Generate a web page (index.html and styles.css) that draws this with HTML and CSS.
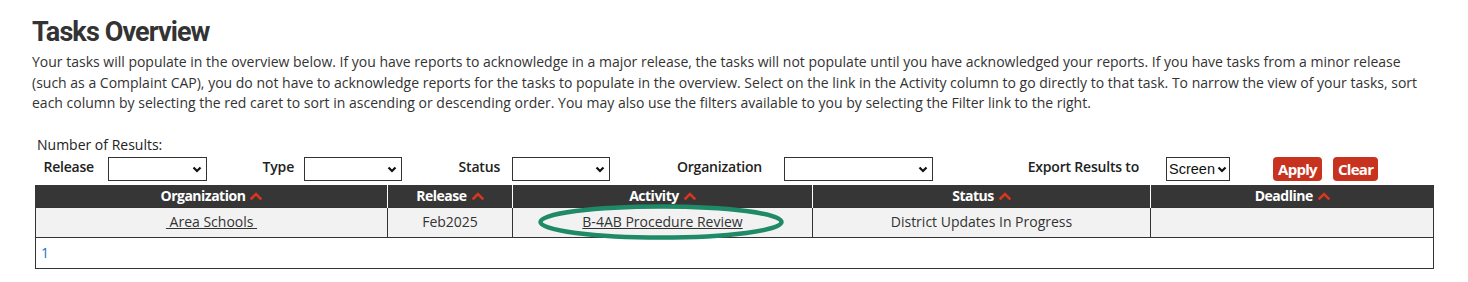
FILE: index.html
```html
<!DOCTYPE html>
<html lang="en">
<head>
<meta charset="utf-8">
<title>Tasks Overview</title>
<link rel="stylesheet" href="styles.css">
</head>
<body>
<div class="page">
  <h1 class="title">Tasks Overview</h1>
  <p class="intro">Your tasks will populate in the overview below. If you have reports to acknowledge in a major release, the tasks will not populate until you have acknowledged your reports. If you have tasks from a minor release (such as a Complaint CAP), you do not have to acknowledge reports for the tasks to populate in the overview. Select on the link in the Activity column to go directly to that task. To narrow the view of your tasks, sort each column by selecting the red caret to sort in ascending or descending order. You may also use the filters available to you by selecting the Filter link to the right.</p>

  <div class="filters">
    <div class="results-label">Number of Results:</div>
    <div class="filter-row">
      <label class="flabel f-release">Release</label>
      <span class="selectwrap"><select class="fselect"><option></option></select><svg class="chev" viewBox="0 0 10 7"><polyline points="1.5,1.5 5,5 8.5,1.5"/></svg></span>
      <label class="flabel f-type">Type</label>
      <span class="selectwrap"><select class="fselect"><option></option></select><svg class="chev" viewBox="0 0 10 7"><polyline points="1.5,1.5 5,5 8.5,1.5"/></svg></span>
      <label class="flabel f-status">Status</label>
      <span class="selectwrap"><select class="fselect"><option></option></select><svg class="chev" viewBox="0 0 10 7"><polyline points="1.5,1.5 5,5 8.5,1.5"/></svg></span>
      <label class="flabel f-org">Organization</label>
      <span class="selectwrap"><select class="fselect"><option></option></select><svg class="chev" viewBox="0 0 10 7"><polyline points="1.5,1.5 5,5 8.5,1.5"/></svg></span>
      <label class="flabel f-export">Export Results to</label>
      <span class="selectwrap"><select class="fselect export"><option>Screen</option></select><svg class="chev chev-export" viewBox="0 0 10 7"><polyline points="1.5,1.5 5,5 8.5,1.5"/></svg></span>
      <div class="buttons">
        <button class="btn">Apply</button>
        <button class="btn">Clear</button>
      </div>
    </div>
  </div>

  <table class="tasks">
    <colgroup>
      <col class="c-org"><col class="c-rel"><col class="c-act"><col class="c-status"><col class="c-dead">
    </colgroup>
    <thead>
      <tr>
        <th>Organization <svg class="caret" viewBox="0 0 12 8"><polyline points="1.5,6.5 6,2 10.5,6.5"/></svg></th>
        <th>Release <svg class="caret" viewBox="0 0 12 8"><polyline points="1.5,6.5 6,2 10.5,6.5"/></svg></th>
        <th>Activity <svg class="caret" viewBox="0 0 12 8"><polyline points="1.5,6.5 6,2 10.5,6.5"/></svg></th>
        <th>Status <svg class="caret" viewBox="0 0 12 8"><polyline points="1.5,6.5 6,2 10.5,6.5"/></svg></th>
        <th>Deadline <svg class="caret" viewBox="0 0 12 8"><polyline points="1.5,6.5 6,2 10.5,6.5"/></svg></th>
      </tr>
    </thead>
    <tbody>
      <tr class="data">
        <td><a href="#">&nbsp;Area Schools&nbsp;</a></td>
        <td>Feb2025</td>
        <td><span class="circled"><a href="#">B-4AB Procedure Review</a><svg class="ring" viewBox="0 0 250 38"><ellipse cx="125" cy="19" rx="120.5" ry="15.5"/></svg></span></td>
        <td>District Updates In Progress</td>
        <td></td>
      </tr>
      <tr class="pager">
        <td colspan="5"><a href="#">1</a></td>
      </tr>
    </tbody>
  </table>
</div>
</body>
</html>
```

FILE: styles.css
```css
html, body {
  margin: 0;
  padding: 0;
  background: #ffffff;
}

body {
  font-family: "Open Sans", "Liberation Sans", sans-serif;
  font-size: 14px;
  color: #333333;
}

.page {
  padding: 15px 32px 0 32px;
}

.title {
  font-family: Roboto, "Liberation Sans", sans-serif;
  font-weight: 700;
  font-size: 27px;
  line-height: 34px;
  letter-spacing: -0.9px;
  margin: 0;
  color: #333333;
}

.intro {
  margin: 3px 0 0 0;
  line-height: 20.5px;
  color: #333333;
}

.filters {
  margin: 21px 0 0 3px;
}

.results-label {
  padding-left: 2px;
  line-height: 20px;
  color: #222222;
  font-weight: 500;
}

.filter-row {
  display: grid;
  grid-template-columns: 73px 99px 97px 98px 110px 98px 174px 149px 233px 64px 1fr;
  align-items: center;
  height: 28px;
  margin-top: 0;
}

.flabel {
  font-weight: 600;
  color: #222222;
  text-align: right;
  padding-right: 12px;
  padding-bottom: 4px;
  letter-spacing: -0.2px;
}

.f-release { padding-right: 14px; }
.f-type { padding-right: 10px; }
.f-status { padding-right: 12px; }
.f-org { padding-right: 22px; }
.f-export { padding-right: 27px; }

.selectwrap {
  position: relative;
  display: block;
  height: 24px;
}

.fselect {
  -webkit-appearance: none;
  appearance: none;
  display: block;
  height: 24px;
  width: 100%;
  box-sizing: border-box;
  border: 1px solid #333333;
  border-radius: 0;
  background: #ffffff;
  font-family: "Liberation Sans", Arial, sans-serif;
  font-size: 15px;
  color: #111111;
  padding: 0 0 0 3px;
  margin: 0;
  outline: none;
}

.fselect.export {
  font-size: 14.5px;
  padding-left: 2px;
}

.chev {
  position: absolute;
  right: 5px;
  top: 9px;
  width: 10px;
  height: 7px;
  pointer-events: none;
}

.chev-export {
  right: 3px;
}

.chev polyline {
  fill: none;
  stroke: #111111;
  stroke-width: 2.2;
}

.buttons {
  display: flex;
  gap: 11px;
  padding-left: 43px;
}

.btn {
  background: #c8331f;
  color: #ffffff;
  border: none;
  border-radius: 4px;
  font-family: "Open Sans", "Liberation Sans", sans-serif;
  font-weight: 700;
  font-size: 15px;
  letter-spacing: -0.7px;
  height: 24px;
  padding: 0 5px;
  line-height: 24px;
}

.tasks {
  margin: 2px 0 0 3px;
  width: 1399px;
  border-collapse: collapse;
  table-layout: fixed;
}

.c-org { width: 352px; }
.c-rel { width: 125px; }
.c-act { width: 300px; }
.c-status { width: 338px; }
.c-dead { width: auto; }

.tasks th {
  background: #363636;
  color: #ffffff;
  font-weight: 700;
  font-size: 14px;
  letter-spacing: -0.5px;
  height: 22px;
  padding: 0;
  line-height: 22px;
  text-align: center;
  border-left: 1px solid #ffffff;
}

.tasks th:first-child {
  border-left: 1px solid #363636;
}

.caret {
  width: 12px;
  height: 8px;
  margin-left: 2px;
  vertical-align: 1px;
}

.caret polyline {
  fill: none;
  stroke: #d8361f;
  stroke-width: 2.6;
  stroke-linecap: square;
}

.tasks td {
  border: 1px solid #333333;
  text-align: center;
  padding: 0;
  height: 29px;
  line-height: 20px;
}

.tasks tr.data td {
  background: #f2f2f2;
}

.tasks a {
  color: #333333;
  text-decoration: underline;
}

.circled {
  position: relative;
  display: inline-block;
}

.ring {
  position: absolute;
  left: 50%;
  top: 50%;
  width: 250px;
  height: 38px;
  margin-left: -127px;
  margin-top: -19px;
  overflow: visible;
  pointer-events: none;
}

.ring ellipse {
  fill: none;
  stroke: #1e8a67;
  stroke-width: 4.5;
}

.tasks tr.pager td {
  background: #ffffff;
  text-align: left;
  height: 30px;
  padding-left: 5px;
}

.tasks tr.pager a {
  color: #1b6fc2;
  text-decoration: none;
}
```
